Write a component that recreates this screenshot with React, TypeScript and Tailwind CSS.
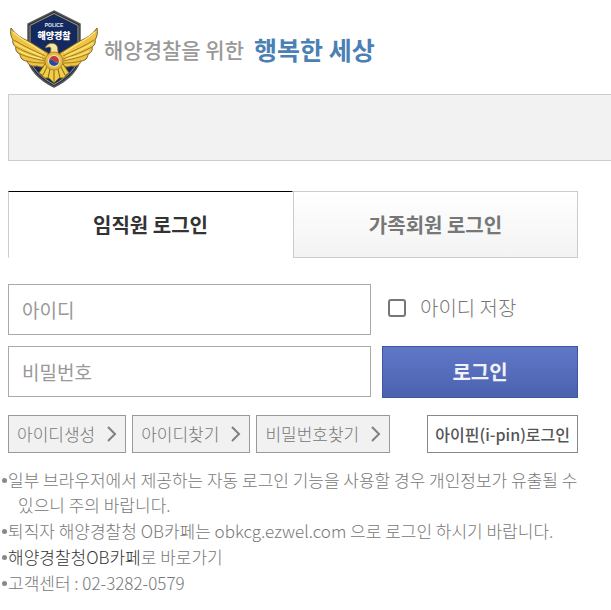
import { useState } from "react";

type TabType = "staff" | "family";

const tabs: { id: TabType; label: string }[] = [
  { id: "staff", label: "임직원 로그인" },
  { id: "family", label: "가족회원 로그인" },
];

const shortcuts = ["아이디생성", "아이디찾기", "비밀번호찾기"];

function Emblem() {
  return (
    <svg viewBox="0 0 90 78" className="h-[78px] w-[90px] shrink-0" role="img" aria-label="해양경찰">
      {/* shield */}
      <path d="M46 1 L72 14 V47 C72 59 60 70 46 77 C32 70 20 59 20 47 V14 Z" fill="#14295f" stroke="#59574f" strokeWidth="1.5" />
      <path d="M46 3.500 L70 15.500 V47 C70 57 59 67.500 46 74.500 C33 67.500 22 57 22 47 V15.500 Z" fill="none" stroke="#b5a45c" strokeWidth="1" />
      <text x="46" y="17" textAnchor="middle" fill="#e4e9f5" fontSize="5" fontWeight="700" fontFamily="Liberation Sans, sans-serif">POLICE</text>
      <text x="46" y="29" textAnchor="middle" fill="#ffffff" fontSize="9" fontWeight="900" fontFamily="Noto Sans CJK KR, sans-serif">해양경찰</text>
      {/* wings */}
      <g id="wing">
        <path d="M40 43 C34 40 29 36 20 31 C13 28 7 24 3 18 C2 23 3 27 5 30 C4 33 6 36 8 37 C7 40 9 43 12 44 C12 48 15 51 19 51 C20 55 24 57 29 56 C33 58 37 57 40 54 Z" fill="#efc443" stroke="#76602a" strokeWidth="1" />
        <path d="M6 30 C15 36 25 40 37 46 M8 37 C17 42 26 45 37 49 M12 44 C21 48 29 49 37 51 M19 51 C26 53 32 53 37 53" fill="none" stroke="#a27c24" strokeWidth="1" />
        <path d="M5 22 C12 29 22 33 36 43 M7 33 C16 39 25 42 34 46 M11 41 C19 46 27 47 34 49" fill="none" stroke="#ffe67c" strokeWidth="1.2" />
      </g>
      <use href="#wing" transform="translate(92 0) scale(-1 1)" />
      {/* tail */}
      <path d="M37 54 L31 63 L34 65 L36 68 L41 68 L46 73 L51 68 L56 68 L58 65 L61 63 L55 54 Z" fill="#f2cd47" stroke="#806824" strokeWidth="1" />
      <path d="M39 57 L35 65 M42 59 L40 68 M46 59 V72 M50 59 L52 68 M53 57 L57 65" stroke="#80621e" strokeWidth="1" />
      {/* head and breast */}
      <path d="M41 46 C43 41 44 37 41 37 L37 38 C39 34 43 32 47 34 C51 36 49 41 51 46 Z" fill="#f5e69c" stroke="#7e6932" strokeWidth="0.800" />
      <circle cx="46" cy="51" r="9" fill="#e8bb3b" stroke="#a98530" />
      <circle cx="46" cy="51" r="6" fill="#f0e3bd" />
      <path d="M41 51 A5 5 0 0 1 51 51 C50 54 47 52 46 51 C45 49 42 49 41 51Z" fill="#c9383d" />
      <path d="M41 51 A5 5 0 0 0 51 51 C50 54 47 52 46 51 C45 49 42 49 41 51Z" fill="#244d97" />
    </svg>
  );
}

function Chevron() {
  return (
    <svg viewBox="0 0 10 16" className="h-4 w-[10px]" fill="none" stroke="#808080" strokeWidth="2" aria-hidden="true">
      <path d="M1 1 L8 8 L1 15" />
    </svg>
  );
}

export default function App() {
  const [active, setActive] = useState<TabType>("staff");
  const [saveId, setSaveId] = useState(false);

  return (
    <div className="min-h-screen bg-white pb-4 font-['Noto_Sans_CJK_KR',sans-serif] text-[#777]">
      {/* HEADER */}
      <header className="flex items-center px-2 pt-[10px]">
        <Emblem />
        <h1 className="ml-1.5 flex items-center gap-2.5 whitespace-nowrap">
          <span className="text-[21px] font-medium leading-7 text-[#999]">해양경찰을 위한</span>
          <span className="text-[25px] font-bold leading-8 text-[#4b80b5]">행복한 세상</span>
        </h1>
      </header>

      <div className="ml-2 mt-1.5 h-[67px] border border-r-0 border-[#ccc] bg-[#f2f2f2]" />

      <main className="ml-2 mt-[30px] max-w-[570px]">
        {/* TABS */}
        <div className="flex" role="tablist">
          {tabs.map((t) => (
            <button
              key={t.id}
              type="button"
              role="tab"
              aria-selected={active === t.id}
              onClick={() => setActive(t.id)}
              className={`h-[67px] flex-1 border text-[20px] font-bold ${
                active === t.id
                  ? "border-b-white border-l-[#ccc] border-r-white border-t-black bg-white text-[#333]"
                  : "border-[#ccc] bg-linear-to-b from-white to-[#f3f3f3] text-[#777]"
              }`}
            >
              {t.label}
            </button>
          ))}
        </div>

        {/* LOGIN FORM */}
        <form className="mt-[26px]" onSubmit={(e) => e.preventDefault()}>
          <div className="grid grid-cols-[1fr_196px] gap-[11px]">
            <input
              type="text"
              aria-label="아이디"
              placeholder="아이디"
              className="h-[51px] w-full min-w-0 border border-[#aaa] px-[13px] text-[19px] outline-none placeholder:text-[#999]"
            />
            <label className="flex items-center gap-3.5 pb-1 pl-1.5 text-[20px] font-light text-[#777]">
              <input
                type="checkbox"
                checked={saveId}
                onChange={(e) => setSaveId(e.target.checked)}
                className="h-[18px] w-[18px] appearance-none rounded-[3px] border-2 border-[#767676] bg-white checked:bg-[#4b64b0]"
              />
              아이디 저장
            </label>
            <input
              type="password"
              aria-label="비밀번호"
              placeholder="비밀번호"
              className="h-[51px] w-full min-w-0 border border-[#aaa] px-[13px] text-[19px] outline-none placeholder:text-[#999]"
            />
            <button
              type="submit"
              className="h-[52px] border border-[#3d55a3] bg-linear-to-b from-[#6078c8] to-[#4a62ae] text-[20px] font-bold text-[#f0f3fb]"
            >
              로그인
            </button>
          </div>
        </form>

        {/* SHORTCUTS */}
        <div className="mt-[17px] flex gap-1.5 whitespace-nowrap">
          {shortcuts.map((s) => (
            <button
              key={s}
              type="button"
              className="flex h-[38px] items-center gap-3 border border-[#999] bg-[#f1f1f1] px-2 text-[17px] font-light text-[#777]"
            >
              {s}
              <Chevron />
            </button>
          ))}
          <button
            type="button"
            className="ml-auto h-[38px] border border-[#888] bg-white px-[7px] text-[16px] font-medium text-[#555]"
          >
            아이핀(i-pin)로그인
          </button>
        </div>
      </main>

      {/* NOTICES */}
      <ul className="mt-[14px] space-y-px pl-2 pr-5 text-[17px] font-light leading-[25px]">
        <li className="relative pl-2.5 -indent-2.5 before:absolute before:-left-1.5 before:top-[11px] before:h-[5px] before:w-[5px] before:rounded-full before:bg-[#888]">
          일부 브라우저에서 제공하는 자동 로그인 기능을 사용할 경우 개인정보가 유출될 수 있으니 주의 바랍니다.
        </li>
        <li className="relative before:absolute before:-left-1.5 before:top-[11px] before:h-[5px] before:w-[5px] before:rounded-full before:bg-[#888]">
          퇴직자 해양경찰청 OB카페는 obkcg.ezwel.com 으로 로그인 하시기 바랍니다.
        </li>
        <li className="relative before:absolute before:-left-1.5 before:top-[11px] before:h-[5px] before:w-[5px] before:rounded-full before:bg-[#888]">
          <a href="#ob-cafe" className="text-[#333]">해양경찰청OB카페</a>로 바로가기
        </li>
        <li className="relative before:absolute before:-left-1.5 before:top-[11px] before:h-[5px] before:w-[5px] before:rounded-full before:bg-[#888]">
          고객센터 : 02-3282-0579
        </li>
      </ul>
    </div>
  );
}
